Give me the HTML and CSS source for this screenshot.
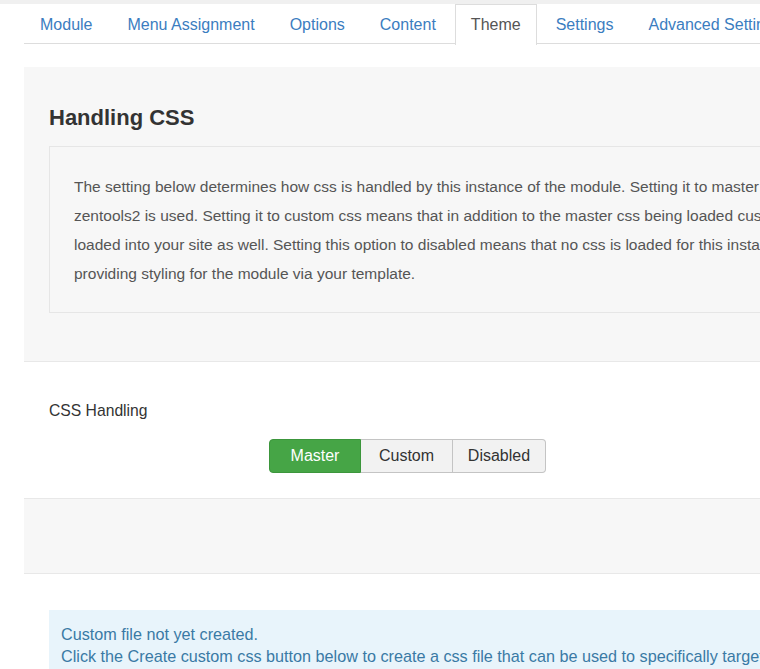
FILE: index.html
```html
<!DOCTYPE html>
<html lang="en">
<head>
  <meta charset="UTF-8" />
  <title>Module - Theme</title>
  <link rel="stylesheet" href="styles.css">
</head>
<body>
  <div class="topbar"></div>

  <div class="container">
    <ul class="tabs">
      <li><a href="#">Module</a></li>
      <li><a href="#">Menu Assignment</a></li>
      <li><a href="#">Options</a></li>
      <li><a href="#">Content</a></li>
      <li class="active"><a href="#">Theme</a></li>
      <li><a href="#">Settings</a></li>
      <li><a href="#">Advanced Settings</a></li>
    </ul>

    <section class="painel">
      <h2>Handling CSS</h2>
      <div class="descricao">
        <p>The setting below determines how css is handled by this instance of the module. Setting it to master css means the master css for<br>
        zentools2 is used. Setting it to custom css means that in addition to the master css being loaded custom css will be<br>
        loaded into your site as well. Setting this option to disabled means that no css is loaded for this instance and you are<br>
        providing styling for the module via your template.</p>
      </div>
    </section>

    <div class="campo">
      <label>CSS Handling</label>
      <div class="btn-group">
        <button class="btn ativo">Master</button>
        <button class="btn">Custom</button>
        <button class="btn">Disabled</button>
      </div>
    </div>

    <section class="painel vazio"></section>

    <div class="alerta">
      <p>Custom file not yet created.</p>
      <p>Click the Create custom css button below to create a css file that can be used to specifically target this module.</p>
    </div>
  </div>
</body>
</html>
```

FILE: styles.css
```css
* {
  margin: 0;
  padding: 0;
  box-sizing: border-box;
}

body {
  background-color: #fff;
  color: #333;
  font-family: "Liberation Sans", Arial, sans-serif;
  overflow: hidden;
  width: 760px;
  height: 669px;
}

.topbar {
  height: 4px;
  background-color: #f0f0f0;
}

.container {
  margin-left: 24px;
  width: 1100px;
}

/* abas */
.tabs {
  display: flex;
  list-style: none;
  border-bottom: 1px solid #ddd;
  height: 40px;
}

.tabs li {
  margin-right: 3px;
}

.tabs a {
  display: block;
  height: 40px;
  line-height: 39px;
  padding: 0 15px;
  font-size: 16px;
  color: #3b7dbf;
  text-decoration: none;
  border: 1px solid transparent;
  border-bottom: none;
}

.tabs li.active a {
  color: #555;
  background-color: #fff;
  border-color: #ddd;
  height: 41px;
}

/* painel cinza */
.painel {
  margin-top: 23px;
  background-color: #f7f7f7;
  border-bottom: 1px solid #e8e8e8;
  padding: 38px 0 48px 25px;
}

.painel h2 {
  font-size: 22px;
  font-weight: bold;
  color: #333;
  margin-bottom: 15px;
}

.descricao {
  width: 1000px;
  border: 1px solid #e6e6e6;
  padding: 25px 0 24px 24px;
}

.descricao p {
  font-size: 15.5px;
  line-height: 29px;
  color: #555;
  white-space: nowrap;
}

/* campo css handling */
.campo {
  padding: 39px 0 0 25px;
  height: 136px;
}

.campo label {
  display: block;
  font-size: 15.7px;
  color: #333;
  line-height: 20px;
}

.btn-group {
  display: flex;
  margin: 18px 0 0 220px;
}

.btn {
  width: 92px;
  height: 34px;
  font-family: inherit;
  font-size: 16px;
  color: #333;
  background-color: #f2f2f2;
  border: 1px solid #c4c4c4;
  border-left: none;
}

.btn:first-child {
  border-left: 1px solid #c4c4c4;
  border-radius: 4px 0 0 4px;
}

.btn:last-child {
  width: 93px;
  border-radius: 0 4px 4px 0;
}

.btn.ativo {
  background-color: #46a546;
  border-color: #3c963c;
  color: #fff;
}

.painel.vazio {
  margin-top: 0;
  height: 76px;
  padding: 0;
  border-top: 1px solid #e8e8e8;
}

/* alerta azul */
.alerta {
  margin: 36px 0 0 25px;
  background-color: #e8f4fb;
  padding: 13px 0 20px 12px;
  color: #3a7aa5;
  font-size: 16.2px;
  line-height: 22px;
  white-space: nowrap;
}
```
